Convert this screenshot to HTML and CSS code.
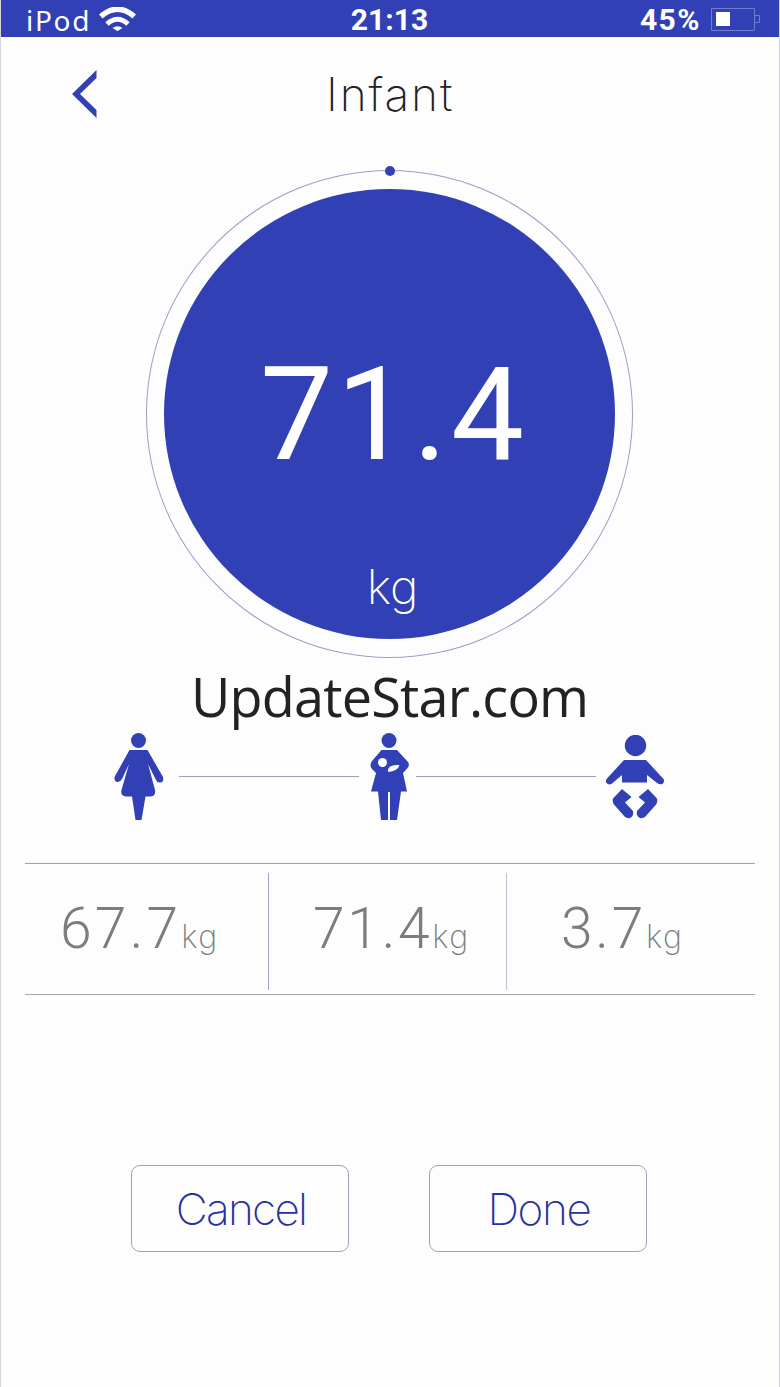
FILE: index.html
```html
<!DOCTYPE html>
<html lang="en">
<head>
  <meta charset="UTF-8">
  <meta name="viewport" content="width=device-width, initial-scale=1.0">
  <title>Infant</title>
  <link rel="stylesheet" href="styles.css">
</head>
<body>
  <div class="status">
    <div class="left">
      <span class="device">iPod</span>
      <svg class="wifi" width="38" height="24" viewBox="0 0 38 24">
        <path d="M1.800 9.500Q18.500 -5 35.200 9.500" fill="none" stroke="#fff" stroke-width="5.500"/>
        <path d="M8 17Q18.500 7.500 29 17" fill="none" stroke="#fff" stroke-width="5"/>
        <path d="M13.500 21Q18.500 17.500 23.500 21L18.500 24Z" fill="#fff"/>
      </svg>
    </div>
    <div class="time">21:13</div>
    <div class="right">
      <span class="percent">45%</span>
      <svg class="battery" width="50" height="24" viewBox="0 0 50 24">
        <path d="M.5 .5H43.500V22.500H.5ZM43.500 7.500H48.500V14.500H43.500" fill="none" stroke="#6f7bd0"/>
        <rect x="5" y="4" width="14" height="14" fill="#fff"/>
      </svg>
    </div>
  </div>

  <div class="header">
    <svg class="back" width="26" height="48" viewBox="0 0 26 48">
      <path d="M25.500 0V8L9 24L25.500 40V48L1 24Z" fill="#3140b4"/>
    </svg>
    <h1>Infant</h1>
  </div>

  <div class="dial">
    <span class="dot"></span>
    <div class="disc">
      <div class="weight">71.4</div>
      <div class="unit">kg</div>
    </div>
  </div>

  <p class="site">UpdateStar.com</p>

  <div class="people">
    <svg class="mother" width="50" height="88" viewBox="0 0 50 88">
      <circle cx="24.500" cy="7.500" r="7.500"/>
      <path d="M15.500 17H33.500L49 44Q50 49 46.500 49.500Q43 50 41.500 46L34 31L41 57Q42 63.500 36 63.500H31.500L27.500 87H21.500L18 63.500H13Q6 63.500 7.500 57L15 31L8 46Q6 49.500 3 49Q-.5 48 .8 43.500Z"/>
    </svg>
    <span class="line"></span>
    <svg class="both" width="40" height="88" viewBox="0 0 40 88">
      <circle cx="19" cy="7.500" r="7.500"/>
      <path d="M11.500 17H27L38 29Q40 32 37.500 35L33 40L37 58.500H31L27 87H20V59H18V87H11L8 58.500H1L6 40L2 36Q-1 32.500 2 28Z"/>
      <circle cx="12.500" cy="29.500" r="4.500" fill="#fff"/>
      <path d="M18 39Q17 31 29.500 32Q28 38 18 39Z" fill="#fff"/>
    </svg>
    <span class="line"></span>
    <svg class="baby" width="60" height="84" viewBox="0 0 60 84">
      <circle cx="30.500" cy="10.500" r="10.700"/>
      <path d="M19 25H41L58.500 44Q60 47 57.500 49Q55 50 52 48L42 40V47.500H17V40L7 48.500Q4 50.500 1.500 48Q0 46 2 43.500Z"/>
      <path d="M17 54L26.500 62L20 67.500L28 76Q29 80 26 82.500Q23 84 20 82L8.500 69Q7 66 8 63.500Z"/>
      <path d="M43 54L33.500 62L40 67.500L32 76Q31 80 34 82.500Q37 84 40 82L51.500 69Q53 66 52 63.500Z"/>
    </svg>
  </div>

  <div class="results">
    <div class="cell first"><span class="num">67.7</span><span class="kg">kg</span></div>
    <div class="cell second"><span class="num">71.4</span><span class="kg">kg</span></div>
    <div class="cell third"><span class="num">3.7</span><span class="kg">kg</span></div>
  </div>

  <div class="buttons">
    <button class="cancel">Cancel</button>
    <button class="done">Done</button>
  </div>
</body>
</html>
```
FILE: styles.css
```css
* {
    box-sizing: border-box;
}
body {
    margin: 0;
    height: 1387px;
    background-color: #fdfdfe;
    font-family: Inter, "Liberation Sans", sans-serif;
    border-left: 1px solid #d4d4da;
    border-right: 1px solid #d4d4da;
    overflow: hidden;
}
.status {
    display: grid;
    grid-template-columns: 1fr auto 1fr;
    height: 37px;
    margin: 0 -1px;
    padding: 0 20px 0 26px;
    background-color: #3140b4;
    color: white;
    line-height: 40px;
}
.left, .right {
    display: flex;
}
.device {
    width: 73px;
    font-family: "Noto Sans", sans-serif;
    font-size: 28px;
    letter-spacing: 1.7px;
}
.wifi {
    margin-top: 7px;
}
.time, .percent {
    font-family: Roboto, sans-serif;
    font-size: 30px;
    font-weight: 700;
}
.time {
    margin-left: -7px;
}
.percent {
    margin-left: -2px;
    letter-spacing: 1.500px;
}
.right {
    justify-content: flex-end;
}
.battery {
    margin: 8px -1px 0 10px;
}
.header {
    display: flex;
    height: 133px;
    padding: 33px 0 0 70px;
}
.back {
    flex: none;
}
.header h1 {
    margin: -3.500px 0 0 229px;
    font-size: 46px;
    line-height: 54px;
    font-weight: 200;
    letter-spacing: 1.900px;
    color: #222;
}
.dial {
    position: relative;
    width: 487px;
    height: 488px;
    margin-left: 145px;
    padding: 18px 17px;
    border: 1px solid #9c9cc8;
    border-radius: 50%;
}
.dot {
    position: absolute;
    top: -5.500px;
    left: 237.500px;
    width: 10px;
    height: 10px;
    border-radius: 50%;
    background-color: #3140b4;
}
.disc {
    width: 451px;
    height: 450px;
    padding-top: 151px;
    border-radius: 50%;
    background-color: #3140b4;
    color: white;
}
.weight {
    padding-left: 96px;
    font-family: Roboto, sans-serif;
    font-size: 130px;
    line-height: 150px;
    letter-spacing: 3.500px;
}
.unit {
    margin-top: 69px;
    text-align: center;
    padding-left: 6px;
    font-size: 48px;
    line-height: 56px;
    font-weight: 200;
}
.site {
    height: 75px;
    margin: 0;
    padding-left: 190px;
    font-family: "Open Sans", "Noto Sans", sans-serif;
    font-size: 54px;
    line-height: 77px;
    letter-spacing: -.8px;
    color: #222;
}
.people {
    display: flex;
    height: 130px;
    padding-left: 113px;
    fill: #3140b4;
}
.people .line {
    width: 180px;
    height: 1px;
    margin: 43px 11px 0 15px;
    background-color: #a0a0b8;
}
.people .both + .line {
    margin-left: 6px;
}
.people .line + .baby {
    margin: 2px 0 0 -2px;
}
.results {
    display: flex;
    width: 730px;
    height: 132px;
    margin-left: 24px;
    padding: 9px 0 4px;
    border-top: 1px solid #a0a0bc;
    border-bottom: 1px solid #a9a9b4;
    color: #7d7d7d;
}
.cell {
    padding-top: 22px;
    line-height: 68px;
    white-space: nowrap;
}
.first {
    width: 244px;
    padding-left: 35px;
    border-right: 1px solid #a3a3d0;
}
.second {
    width: 238px;
    padding-left: 44px;
    border-right: 1px solid #c0c0d4;
}
.third {
    padding-left: 54px;
}
.num {
    font-family: Roboto, sans-serif;
    font-size: 57px;
    font-weight: 300;
    letter-spacing: 2.700px;
}
.first .num {
    letter-spacing: 3.200px;
}
.kg {
    font-size: 32px;
    font-weight: 250;
    letter-spacing: 1.500px;
}
.buttons {
    display: flex;
    gap: 80px;
    padding: 170px 0 0 130px;
}
.buttons button {
    width: 218px;
    height: 87px;
    padding: 1px 0 0 2px;
    border: 1px solid #a0a0cc;
    border-radius: 9px;
    background: none;
    font-family: Inter, sans-serif;
    font-size: 44px;
    font-weight: 200;
    letter-spacing: -1.700px;
    color: #2631a0;
}
.buttons .done {
    letter-spacing: -1.300px;
}
```
